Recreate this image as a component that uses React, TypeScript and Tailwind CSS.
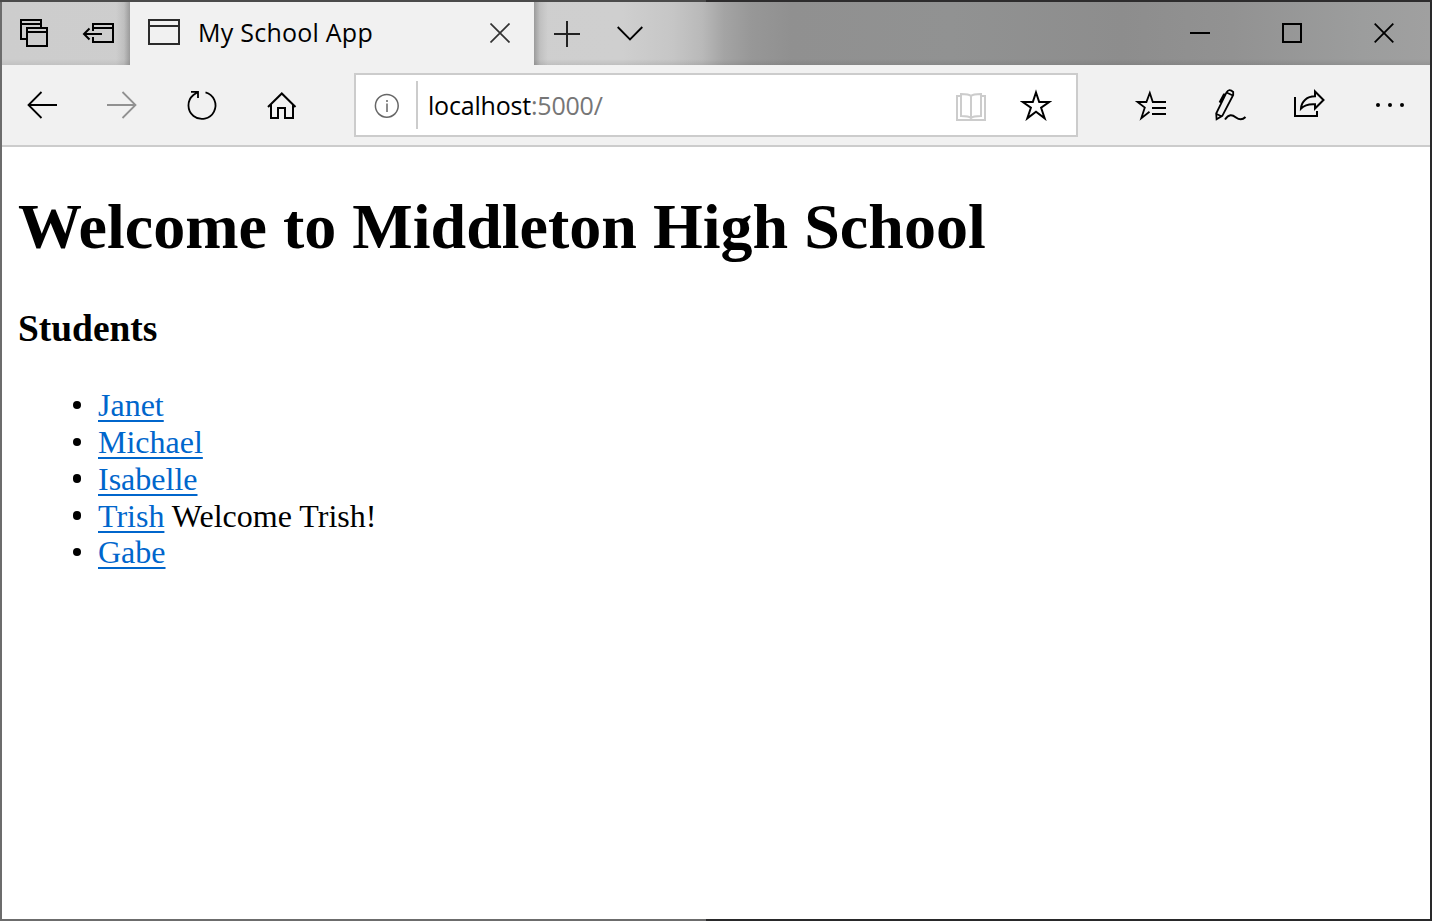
import React from "react";

type ButtonProps = { label: string; children: React.ReactNode };

function ToolButton({ label, children }: ButtonProps) {
  return (
    <button aria-label={label} className="h-20 w-20 shrink-0">
      <svg viewBox="0 0 80 80" className="size-20 fill-none stroke-black" strokeWidth="2">
        {children}
      </svg>
    </button>
  );
}

function CaptionButton({ label, children }: ButtonProps) {
  return (
    <button aria-label={label} className="flex h-[63px] w-[92px] items-start justify-center pt-[21px]">
      <svg viewBox="0 0 20 20" className="size-5 overflow-visible fill-none stroke-black" strokeWidth="2">
        {children}
      </svg>
    </button>
  );
}

function TitleBar() {
  return (
    <header className="flex h-[63px] bg-[linear-gradient(90deg,#cdcdcd_0px,#cfcfcf_620px,#c6c6c6_670px,#b9b9b9_700px,#a4a4a4_722px,#979797_750px,#909090_790px,#919292_950px,#8d8d8d_1120px,#929292_1230px,#9c9d9d_1360px,#a0a0a0_1428px)]">
      <div className="flex w-32 shrink-0 bg-[linear-gradient(270deg,rgba(0,0,0,0.25),rgba(0,0,0,0.07)_6px,transparent_14px),linear-gradient(0deg,rgba(0,0,0,0.06),transparent_6px)] pl-[18px] pt-[17px]">
        <svg viewBox="0 0 28 28" className="size-7 fill-none stroke-black" strokeWidth="2">
          <path d="M6 20H1V1H21V8M1 5H21M7 9H27V27H7ZM7 13H27" />
        </svg>
        <svg viewBox="0 0 32 28" className="ml-[34px] h-7 w-8 fill-none stroke-black" strokeWidth="2">
          <path d="M11 12V5H31V23H11V18M11 9H31M2 15H20M7.5 9.5L2 15L7.5 20.5" />
        </svg>
      </div>
      <div className="flex w-[404px] shrink-0 items-start bg-[#f1f1f1] pl-[18px]">
        <svg viewBox="0 0 32 26" className="mt-[17px] h-[26px] w-8 fill-none stroke-[#2b2b2b]" strokeWidth="2">
          <path d="M1 1H31V25H1ZM1 7H31" />
        </svg>
        <span className="ml-[18px] mt-3 w-[292px] font-['Open_Sans',sans-serif] text-[25px] leading-9 tracking-[0.24px] whitespace-nowrap text-black">
          My School App
        </span>
        <svg viewBox="0 0 20 20" className="mt-[21px] size-5 shrink-0 fill-none stroke-[#333]" strokeWidth="1.7">
          <path d="M.5 .5L19.5 19.5M19.5 .5L.5 19.5" />
        </svg>
      </div>
      <div className="flex flex-1 bg-[linear-gradient(90deg,rgba(0,0,0,0.25),rgba(0,0,0,0.07)_6px,transparent_14px),linear-gradient(0deg,rgba(0,0,0,0.08),transparent_6px)] pl-5">
        <svg viewBox="0 0 26 26" className="mt-[19px] size-[26px] fill-none stroke-[#222]" strokeWidth="2">
          <path d="M0 13H26M13 0V26" />
        </svg>
        <svg viewBox="0 0 26 16" className="ml-[37px] mt-[23px] h-4 w-[26px] fill-none stroke-black" strokeWidth="1.8">
          <path d="M.7 2L13 14.5L25.3 2" />
        </svg>
        <div className="ml-auto flex">
          <CaptionButton label="Minimize"><path d="M0 10H20" /></CaptionButton>
          <CaptionButton label="Maximize"><path d="M1 1H19V19H1Z" /></CaptionButton>
          <CaptionButton label="Close"><path strokeWidth="1.8" d="M.7 .7L19.3 19.3M19.3 .7L.7 19.3" /></CaptionButton>
        </div>
      </div>
    </header>
  );
}

function AddressBar() {
  return (
    <div className="mx-8 flex h-16 w-[724px] shrink-0 border-2 border-[#ccc] bg-white">
      <svg viewBox="0 0 26 26" className="ml-[18px] mt-[18px] size-[26px] shrink-0 fill-none stroke-[#666]" strokeWidth="1.5">
        <circle cx="12.8" cy="12.8" r="11.4" />
        <path d="M13 10.5V19M13 7V9" />
      </svg>
      <div className="ml-4 mt-1.5 h-12 w-0.5 shrink-0 bg-[#ccc]" />
      <span className="ml-2.5 mt-3 font-['Open_Sans',sans-serif] text-[25px] leading-9 tracking-[-0.2px] whitespace-nowrap text-black">
        localhost<span className="text-[#767676]">:5000/</span>
      </span>
      <svg viewBox="0 0 30 28" className="ml-auto mt-[18px] h-7 w-[30px] shrink-0 fill-none stroke-[#ccc]" strokeWidth="2">
        <path d="M4 3H1V27H29V3H26M15 3C13 1 10 1 5 1V23C10 23 13 23 15 25C17 23 20 23 25 23V1C20 1 17 1 15 3V25" />
      </svg>
      <svg viewBox="0 0 32 32" className="ml-[34px] mr-[24px] mt-[14px] size-8 shrink-0 fill-none stroke-black" strokeWidth="2">
        <path d="M16 3.5L19.2 13H29.2L21.1 18.7L24.7 29.4L16 22.8L7.3 29.4L10.9 18.7L2.8 13H12.8Z" />
      </svg>
    </div>
  );
}

function Toolbar() {
  return (
    <nav className="flex h-[82px] items-start border-b-2 border-[#ccc] bg-[#f1f1f1]">
      <ToolButton label="Back"><path d="M26.5 40H55M39.5 27L26.5 40L39.5 53" strokeWidth="1.8" /></ToolButton>
      <ToolButton label="Forward"><path className="stroke-[#919191]" d="M25 40H53.5M40.5 27L53.5 40L40.5 53" strokeWidth="1.8" /></ToolButton>
      <ToolButton label="Refresh">
        <path strokeWidth="1.8" d="M43.5 27.4A13.5 13.5 0 1 1 31.4 30L35.5 27.2M29 26.9H36V33" />
      </ToolButton>
      <ToolButton label="Home">
        <path d="M26 42L39.8 28.5L53.5 42M29 39.5V53H36V43H43V53H51V39.5" />
      </ToolButton>
      <div className="pt-2"><AddressBar /></div>
      <ToolButton label="Favorites">
        <path strokeWidth="1.8" d="M56 37H42.8L39.8 28L36.4 37H27.5L34.8 42.5L31.3 53.2L39.5 46.8" />
        <path d="M43 37H56M42 43H56M42 49H56" />
      </ToolButton>
      <ToolButton label="Add notes">
        <path strokeWidth="1.8" d="M26.2 48.5L36.3 27.8Q39 23 43.2 27V30L32.3 50.8L26.6 54.3ZM36.5 27.5L42.8 30.5M26.5 49L32 51.5M29.5 37.5L33.8 29.5L36 29.5" />
        <path d="M35 54.5C39 49 42 49.5 46 52.5C50 55.5 53 54.5 55.5 52" />
      </ToolButton>
      <ToolButton label="Share">
        <path d="M25 32V51H47V46M31 43.5C31.5 36 37 31.5 45 31.3V26.5L53.5 35L45 43.5V39.2C38.5 38.8 34 40.3 31 43.5Z" />
      </ToolButton>
      <ToolButton label="More">
        <g className="fill-black stroke-none">
          <circle cx="28" cy="40" r="2" /><circle cx="40" cy="40" r="2" /><circle cx="52" cy="40" r="2" />
        </g>
      </ToolButton>
    </nav>
  );
}

const students = [
  { name: "Janet" },
  { name: "Michael" },
  { name: "Isabelle" },
  { name: "Trish", note: "Welcome Trish!" },
  { name: "Gabe" },
];

export default function App() {
  return (
    <div className="h-[921px] w-[1432px] overflow-hidden bg-[linear-gradient(90deg,#6c6c6c_706px,#29292a_706px)] p-0.5">
      <div className="-mx-0.5 -mt-0.5 h-0.5 bg-[linear-gradient(90deg,#4b4b4b_706px,#2d2c2d_706px)]" />
      <div className="h-[917px] bg-white">
        <TitleBar />
        <Toolbar />
        <main className="pl-4 pt-[43px] font-['Liberation_Serif',serif] text-[32px] leading-[36.8px] text-black">
          <h1 className="text-[64px] leading-[74px] font-bold tracking-[0.02px] whitespace-nowrap">Welcome to Middleton High School</h1>
          <h3 className="mt-[43px] text-[37.44px] leading-[43px] font-bold">Students</h3>
          <ul className="mt-[37.3px]">
            {students.map((s) => (
              <li key={s.name} className="flex items-start whitespace-pre">
                <span className="ml-[54.5px] mt-[13.5px] mr-[17px] size-[8.5px] shrink-0 rounded-full bg-black" />
                <span>
                  <a href="#" className="text-[#0066cc] underline decoration-2 underline-offset-[4px] [text-decoration-skip-ink:none]">{s.name}</a>
                  {s.note ? " " + s.note : ""}
                </span>
              </li>
            ))}
          </ul>
        </main>
      </div>
    </div>
  );
}
